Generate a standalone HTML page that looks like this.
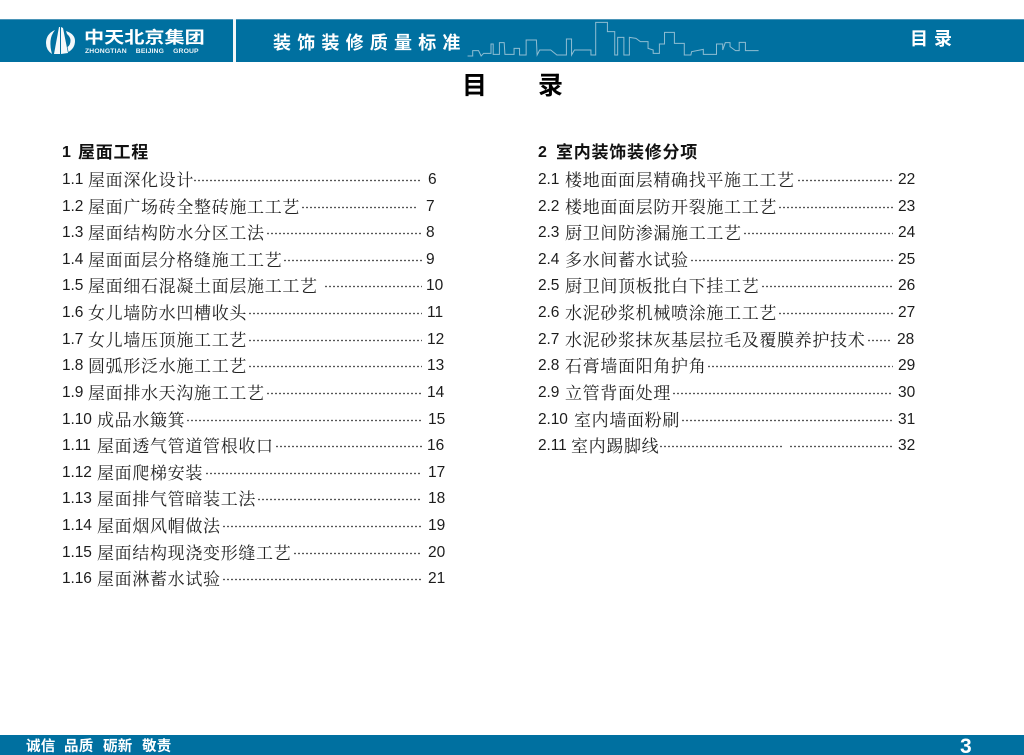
<!DOCTYPE html>
<html lang="zh-CN">
<head>
<meta charset="utf-8">
<title>目录</title>
<style>
html,body{margin:0;padding:0;background:#fff}
#p{position:relative;width:1024px;height:755px;overflow:hidden;background:#fff;font-family:"Liberation Sans","Noto Serif CJK SC",serif;color:#1c1c1c}
.band{position:absolute;left:0;width:1024px;background:#0070a0}
.a{position:absolute;white-space:nowrap}
.z{font-family:"Liberation Sans","Noto Sans CJK SC",sans-serif;font-weight:700;color:#fff}
.l{position:absolute;height:20px;line-height:20px;white-space:nowrap;font-size:15.5px;margin-top:1px}
.l b{position:absolute;left:0;top:0;font-weight:400;letter-spacing:-.1px}
.l span{position:absolute;top:-1px;font-size:17px;letter-spacing:.67px;font-family:"Noto Serif CJK SC",serif;color:#222}
.l i{position:absolute;top:0;height:20px;background-image:radial-gradient(circle at 2px 10.5px,#222 0,#222 .6px,transparent 1px);background-size:4px 20px;background-repeat:repeat-x}
.l u{position:absolute;top:0;text-decoration:none}
.h{position:absolute;height:22px;line-height:22px;font-family:"Liberation Sans","Noto Sans CJK SC",sans-serif;font-weight:700;font-size:16px;color:#111;white-space:nowrap}
.h span{position:absolute;top:0;font-size:17px;letter-spacing:.75px}
</style>
</head>
<body>
<div id="p">
<div class="band" style="top:19px;height:43px"></div>
<div style="position:absolute;left:0;top:19px;width:1024px;height:1px;background:#4b95b8"></div>
<div style="position:absolute;left:233px;top:19px;width:3px;height:43px;background:#f2f6f8"></div>

<svg class="a" style="left:0;top:0" width="240" height="62" viewBox="0 0 240 62">
<path fill="#f4f8fa" d="M59 27 L60 27 L60 54 L54 54 Z"/>
<path fill="#f4f8fa" d="M61 27 L63 28 L68 53 L61 54 Z"/>
<path fill="#f4f8fa" d="M55 30 Q46 34 46 43 Q46 50 52 54 Q50 47 50.500 41 Q51 35 55 30 Z"/>
<path fill="#f4f8fa" d="M66 31 Q75 34 75 41 Q75 48 68.500 52 L67.500 47 Q70.500 45 70.500 40.500 Q70.500 37 67 34 Z"/>
</svg>
<div class="a z" style="left:84px;top:26.500px;font-size:16.500px;line-height:22px;transform:scaleX(1.22);transform-origin:0 50%">中天北京集团</div>
<div class="a z" style="left:85px;top:48px;font-size:6.800px;line-height:8px;word-spacing:7px;letter-spacing:.15px;opacity:.92">ZHONGTIAN BEIJING GROUP</div>

<div class="a z" style="left:273px;top:32px;font-size:18px;line-height:22px;letter-spacing:6.200px">装饰装修质量标准</div>
<div class="a z" style="left:910px;top:28px;font-size:18px;line-height:22px;letter-spacing:6px">目录</div>

<svg class="a" style="left:450px;top:0" width="574" height="110" viewBox="0 0 1568 330" preserveAspectRatio="none">
<polyline fill="none" stroke="#8fbdd2" stroke-width="1" vector-effect="non-scaling-stroke" points="48,168 62,168 62,152 78,152 85,168 92,160 112,160 112,132 118,132 118,163 135,163 135,128 148,128 150,163 175,163 175,145 190,145 190,165 208,165 208,120 236,120 238,165 245,150 275,150 292,165 318,165 318,117 332,117 332,165 340,150 385,150 385,165 398,165 398,67 430,67 430,95 450,95 450,165 458,165 458,112 475,112 475,165 490,165 490,112 508,115 520,125 541,125 541,145 555,150 555,160 572,160 572,132 586,132 586,97 613,97 613,130 640,130 640,165 658,165 660,155 692,148 692,163 728,163 728,132 745,132 745,150 752,128 765,128 765,140 780,152 790,152 790,127 807,127 807,152 843,152"/>
</svg>

<div class="a" style="left:462px;top:71px;font-family:'Liberation Sans','Noto Sans CJK SC',sans-serif;font-weight:700;font-size:25px;line-height:30px;color:#000">目</div>
<div class="a" style="left:538px;top:71px;font-family:'Liberation Sans','Noto Sans CJK SC',sans-serif;font-weight:700;font-size:25px;line-height:30px;color:#000">录</div>

<div class="h" style="left:62px;top:142px">1<span style="left:16px">屋面工程</span></div>
<div class="h" style="left:538px;top:142px">2<span style="left:18px">室内装饰装修分项</span></div>

<div class="l" style="left:62px;top:169px"><b>1.1</b><span style="left:26px">屋面深化设计</span><i style="left:131px;width:229px"></i><u style="left:366px">6</u></div>
<div class="l" style="left:62px;top:196px"><b>1.2</b><span style="left:26px">屋面广场砖全整砖施工工艺</span><i style="left:239px;width:116px"></i><u style="left:364px">7</u></div>
<div class="l" style="left:62px;top:222px"><b>1.3</b><span style="left:26px">屋面结构防水分区工法</span><i style="left:204px;width:156px"></i><u style="left:364px">8</u></div>
<div class="l" style="left:62px;top:249px"><b>1.4</b><span style="left:26px">屋面面层分格缝施工工艺</span><i style="left:221px;width:139px"></i><u style="left:364px">9</u></div>
<div class="l" style="left:62px;top:275px"><b>1.5</b><span style="left:26px">屋面细石混凝土面层施工工艺</span><i style="left:262px;width:98px"></i><u style="left:364px">10</u></div>
<div class="l" style="left:62px;top:302px"><b>1.6</b><span style="left:26px">女儿墙防水凹槽收头</span><i style="left:186px;width:174px"></i><u style="left:365px">11</u></div>
<div class="l" style="left:62px;top:329px"><b>1.7</b><span style="left:26px">女儿墙压顶施工工艺</span><i style="left:186px;width:174px"></i><u style="left:365px">12</u></div>
<div class="l" style="left:62px;top:355px"><b>1.8</b><span style="left:26px">圆弧形泛水施工工艺</span><i style="left:186px;width:174px"></i><u style="left:365px">13</u></div>
<div class="l" style="left:62px;top:382px"><b>1.9</b><span style="left:26px">屋面排水天沟施工工艺</span><i style="left:204px;width:156px"></i><u style="left:365px">14</u></div>
<div class="l" style="left:62px;top:409px"><b>1.10</b><span style="left:35px">成品水簸箕</span><i style="left:124px;width:236px"></i><u style="left:366px">15</u></div>
<div class="l" style="left:62px;top:435px"><b>1.11</b><span style="left:35px">屋面透气管道管根收口</span><i style="left:213px;width:147px"></i><u style="left:365px">16</u></div>
<div class="l" style="left:62px;top:462px"><b>1.12</b><span style="left:35px">屋面爬梯安装</span><i style="left:143px;width:217px"></i><u style="left:366px">17</u></div>
<div class="l" style="left:62px;top:488px"><b>1.13</b><span style="left:35px">屋面排气管暗装工法</span><i style="left:195px;width:165px"></i><u style="left:366px">18</u></div>
<div class="l" style="left:62px;top:515px"><b>1.14</b><span style="left:35px">屋面烟风帽做法</span><i style="left:160px;width:200px"></i><u style="left:366px">19</u></div>
<div class="l" style="left:62px;top:542px"><b>1.15</b><span style="left:35px">屋面结构现浇变形缝工艺</span><i style="left:231px;width:129px"></i><u style="left:366px">20</u></div>
<div class="l" style="left:62px;top:568px"><b>1.16</b><span style="left:35px">屋面淋蓄水试验</span><i style="left:160px;width:200px"></i><u style="left:366px">21</u></div>

<div class="l" style="left:538px;top:169px"><b>2.1</b><span style="left:27px">楼地面面层精确找平施工工艺</span><i style="left:259px;width:96px"></i><u style="left:360px">22</u></div>
<div class="l" style="left:538px;top:196px"><b>2.2</b><span style="left:27px">楼地面面层防开裂施工工艺</span><i style="left:240px;width:115px"></i><u style="left:360px">23</u></div>
<div class="l" style="left:538px;top:222px"><b>2.3</b><span style="left:27px">厨卫间防渗漏施工工艺</span><i style="left:205px;width:150px"></i><u style="left:360px">24</u></div>
<div class="l" style="left:538px;top:249px"><b>2.4</b><span style="left:27px">多水间蓄水试验</span><i style="left:152px;width:203px"></i><u style="left:360px">25</u></div>
<div class="l" style="left:538px;top:275px"><b>2.5</b><span style="left:27px">厨卫间顶板批白下挂工艺</span><i style="left:223px;width:132px"></i><u style="left:360px">26</u></div>
<div class="l" style="left:538px;top:302px"><b>2.6</b><span style="left:27px">水泥砂浆机械喷涂施工工艺</span><i style="left:240px;width:115px"></i><u style="left:360px">27</u></div>
<div class="l" style="left:538px;top:329px"><b>2.7</b><span style="left:27px">水泥砂浆抹灰基层拉毛及覆膜养护技术</span><i style="left:329px;width:25px"></i><u style="left:359px">28</u></div>
<div class="l" style="left:538px;top:355px"><b>2.8</b><span style="left:27px">石膏墙面阳角护角</span><i style="left:169px;width:186px"></i><u style="left:360px">29</u></div>
<div class="l" style="left:538px;top:382px"><b>2.9</b><span style="left:27px">立管背面处理</span><i style="left:134px;width:221px"></i><u style="left:360px">30</u></div>
<div class="l" style="left:538px;top:409px"><b>2.10</b><span style="left:36px">室内墙面粉刷</span><i style="left:143px;width:212px"></i><u style="left:360px">31</u></div>
<div class="l" style="left:538px;top:435px"><b>2.11</b><span style="left:33px">室内踢脚线</span><i style="left:121px;width:124px"></i><i style="left:251px;width:104px"></i><u style="left:360px">32</u></div>

<div class="band" style="top:735px;height:20px"></div>
<div class="a z" style="left:26px;top:738px;font-size:14.500px;line-height:18px;letter-spacing:.3px">诚信</div>
<div class="a z" style="left:64px;top:738px;font-size:14.500px;line-height:18px;letter-spacing:.3px">品质</div>
<div class="a z" style="left:103px;top:738px;font-size:14.500px;line-height:18px;letter-spacing:.3px">砺新</div>
<div class="a z" style="left:142px;top:738px;font-size:14.500px;line-height:18px;letter-spacing:.3px">敬责</div>
<div class="a" style="left:960px;top:735px;font-size:21px;line-height:24px;color:#fff;font-weight:700">3</div>
</div>
</body>
</html>
